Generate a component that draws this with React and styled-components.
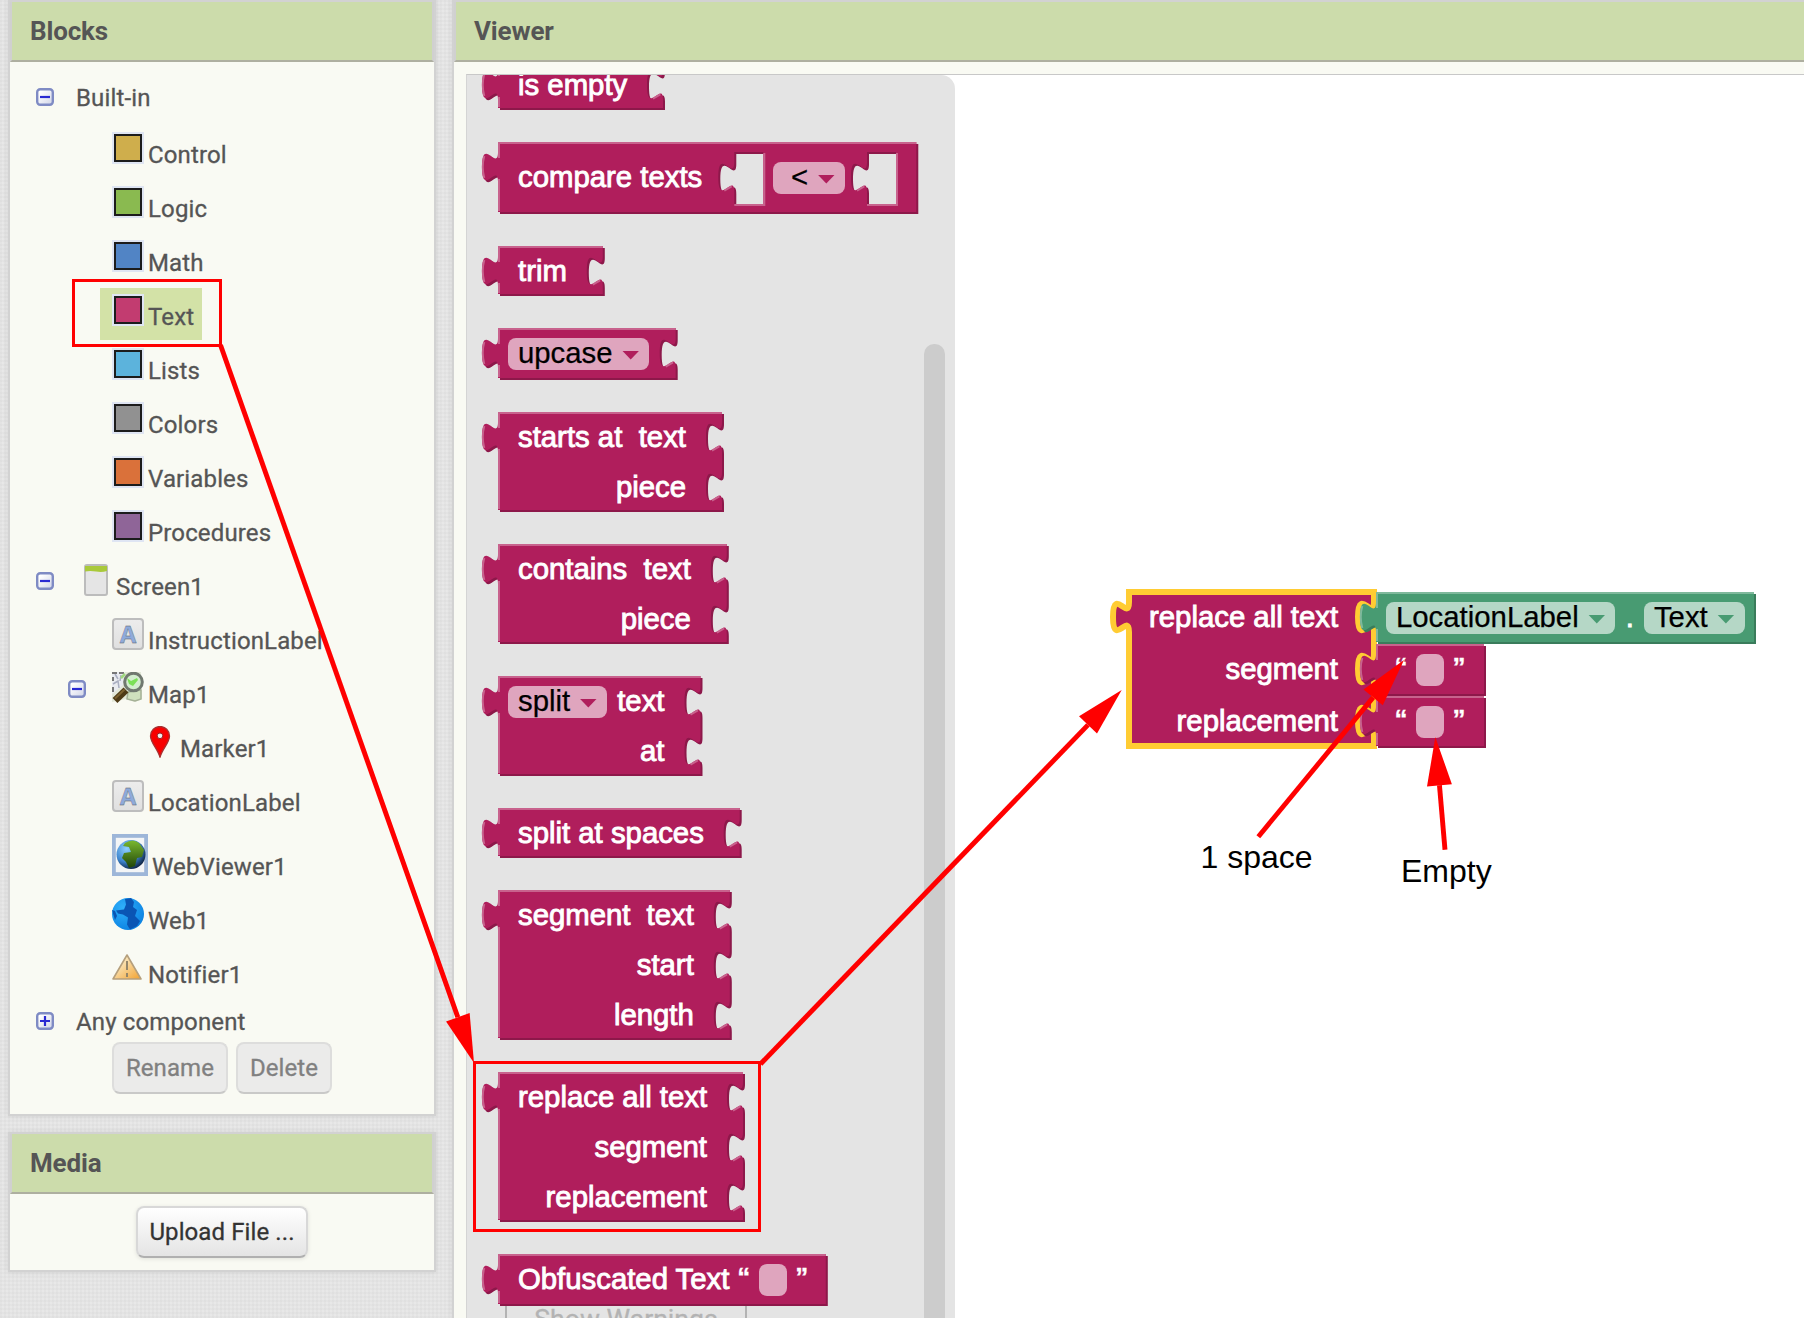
import React from "react";
import styled, { createGlobalStyle } from "styled-components";

const PINK = { fill: "#b01e5c", dark: "#8d184a", light: "#c8628d" };
const GREEN = { fill: "#489b72", dark: "#3a7c5b", light: "#7fb99c" };
const YELLOW = "#ffcc33";

const GlobalStyle = createGlobalStyle`
  * { box-sizing: border-box; }
  html, body { margin: 0; height: 100%; overflow: hidden; }
  body { font-family: Roboto, sans-serif; font-size: 24px; color: #555; }
`;

/* ---------- page frame ---------- */

const Page = styled.div`
  position: relative;
  display: flex;
  gap: 16px;
  width: 1804px;
  height: 1318px;
  padding-left: 8px;
  overflow: hidden;
  background-color: #e8e8e8;
  background-image:
    repeating-linear-gradient(0deg, rgba(0, 0, 0, 0.018) 0 2px, transparent 2px 4px),
    repeating-linear-gradient(90deg, rgba(0, 0, 0, 0.018) 0 2px, transparent 2px 4px);
`;

const Sidebar = styled.div`
  display: flex;
  flex-direction: column;
  gap: 16px;
  width: 428px;
  flex: none;
`;

const Panel = styled.section`
  display: flex;
  flex-direction: column;
  height: ${(p) => p.$height}px;
  border: 2px solid #d2d2d2;
  background: #f9faf3;
  box-shadow: 0 0 6px rgba(0, 0, 0, 0.08);
`;

const ViewerPanel = styled(Panel)`
  flex: 1;
  border-right: 0;
  border-bottom: 0;
`;

const Caption = styled.h2`
  flex: none;
  height: 60px;
  margin: 0;
  padding-left: 18px;
  border: solid #d0d0d0;
  border-width: 0 2px;
  border-right-width: ${(p) => (p.$openEnd ? 0 : 2)}px;
  border-bottom: 2px solid #aeafa0;
  background: #ccdcab;
  font-size: 26px;
  font-weight: 700;
  letter-spacing: -0.15px;
  line-height: 58px;
`;

/* ---------- component tree ---------- */

const Tree = styled.div`
  display: flex;
  flex-direction: column;
  padding: 13px 0 0 26px;
  letter-spacing: 0.14px;
  -webkit-text-stroke: 0.3px #555;
`;

const TreeRow = styled.div`
  display: flex;
  align-items: flex-start;
  height: ${(p) => p.$height}px;
  padding-left: ${(p) => p.$level * 32}px;
`;

const Toggle = styled.div`
  display: flex;
  flex: none;
  width: 32px;
  padding-top: ${(p) => (p.$plain ? 13 : 15)}px;
`;

const PlainLabel = styled.div`
  padding-left: 8px;
  line-height: 46px;
`;

const Item = styled.div`
  display: flex;
  align-items: flex-start;
  gap: 4px;
  height: ${(p) => p.$height - 2}px;
  margin-top: 1px;
  padding: 6px 8px 0 12px;
  background: ${(p) => (p.$selected ? "#d3e2a7" : "transparent")};
`;

const ItemLabel = styled.span`
  padding-top: ${(p) => p.$offset}px;
  line-height: 42px;
  white-space: nowrap;
`;

const Swatch = styled.span`
  width: 32px;
  height: 32px;
  border: 2px solid #dfe5f3;
  background: ${(p) => p.$color};
  box-shadow: inset 0 0 0 2px #1c1c1c;
`;

const LabelTile = styled.span`
  width: 32px;
  height: 32px;
  border: 2px solid #bdbdbd;
  border-radius: 4px;
  background: linear-gradient(#ececec, #e0e0e0);
  color: #8eaadb;
  font: bold 24px/28px "Noto Sans", sans-serif;
  text-align: center;
`;

const ButtonRow = styled.div`
  display: flex;
  gap: 8px;
  padding-left: 102px;
`;

const Button = styled.button`
  width: ${(p) => p.$width}px;
  height: 52px;
  padding: 0 0 1px;
  border: 2px solid ${(p) => (p.$muted ? "#dddddc" : "#d8d8d8")};
  border-bottom-color: ${(p) => (p.$muted ? "#c9c9c8" : "#b0b0b0")};
  border-radius: 8px;
  background: ${(p) => (p.$muted ? "#ebebea" : "linear-gradient(#ffffff, #e4e4e4)")};
  box-shadow: ${(p) => (p.$muted ? "none" : "0 1px 4px rgba(0,0,0,.1)")};
  color: ${(p) => (p.$muted ? "#808080" : "#333")};
  font: 24px Roboto, sans-serif;
  letter-spacing: 0.1px;
  -webkit-text-stroke: 0.3px currentColor;
  white-space: nowrap;
`;

const MediaBody = styled.div`
  display: flex;
  justify-content: center;
  padding-top: 12px;
`;

/* ---------- workspace and flyout ---------- */

const Workspace = styled.div`
  position: relative;
  flex: 1;
  margin: 12px 0 0 12px;
  border-top: 1px solid #c8c8c8;
  border-left: 1px solid #d4d4d4;
  background: #fff;
  overflow: hidden;
`;

const Flyout = styled.div`
  position: relative;
  display: flex;
  width: 488px;
  height: 1243px;
  border-radius: 0 14px 0 0;
  background: #e4e4e4;
  overflow: hidden;
`;

const FlyoutList = styled.div`
  position: relative;
  display: flex;
  flex-direction: column;
  gap: 34px;
  flex: 1;
  margin-top: -15px;
  padding-left: 31px;
`;

const ScrollThumb = styled.div`
  width: 21px;
  margin: 269px 10px 0 0;
  border-radius: 10px 10px 0 0;
  background: #cccccc;
`;

const WarningsButton = styled.div`
  position: absolute;
  left: 38px;
  top: 1216px;
  width: 242px;
  height: 60px;
  border: 2px solid #b3b3b3;
  color: #b3b3b3;
  font-size: 26.6px;
  line-height: 51px;
  text-align: center;
  -webkit-text-stroke: 0.3px #b3b3b3;
`;

/* ---------- blocks ---------- */

const BlockBox = styled.div`
  position: relative;
  display: flex;
  flex: none;
  flex-direction: column;
  width: ${(p) => p.$width}px;
  height: ${(p) => p.$height}px;
  padding-top: ${(p) => p.$padTop || 0}px;
  font: 29.33px "Liberation Sans", sans-serif;
  color: #fff;
`;

const BlockArt = styled.svg`
  position: absolute;
  left: 0;
  top: 0;
  overflow: visible;
`;

const BlockRow = styled.div`
  position: relative;
  display: flex;
  flex: none;
  justify-content: ${(p) => (p.$packed ? "flex-start" : p.$end ? "flex-end" : "space-between")};
  height: ${(p) => p.$height || 50}px;
  padding-right: ${(p) => (p.$packed ? 0 : 36)}px;
`;

const Word = styled.span`
  line-height: 50px;
  padding-left: ${(p) => (p.$first ? 20 : 0)}px;
  white-space: pre;
  -webkit-text-stroke: 0.9px #fff;
`;

const Dot = styled(Word)`
  width: 28.5px;
  text-align: center;
`;

const Chip = styled.span`
  display: flex;
  align-items: center;
  gap: 9.5px;
  height: 32px;
  margin: 10px 0 0 ${(p) => p.$margin || 0}px;
  padding: 0 10px 0 ${(p) => p.$padLeft || 10}px;
  border-radius: 8px;
  background: rgba(255, 255, 255, 0.6);
  color: #000;
  line-height: 32px;
  -webkit-text-stroke: 0.25px #000;
`;

const ChipText = styled.span`
  height: 32px;
  margin-top: -2px;
`;

const Arrow = styled.span`
  width: 17.3px;
  height: 9px;
  margin-top: 2px;
  background: ${(p) => p.$color};
  clip-path: polygon(0 0, 100% 0, 50% 100%);
`;

const SocketGap = styled.span`
  width: ${(p) => p.$width}px;
`;

const Quote = styled.span`
  width: 30px;
  margin-left: ${(p) => p.$margin || 0}px;
  text-align: center;
  font-size: 26px;
  font-weight: 700;
  line-height: 47px;
  -webkit-text-stroke: 0.3px #fff;
`;

const TextField = styled.span`
  width: 28px;
  height: 32px;
  margin-top: 10px;
  border-radius: 8px;
  background: rgba(255, 255, 255, 0.6);
`;

const Placed = styled.div`
  position: absolute;
  left: ${(p) => p.$x}px;
  top: ${(p) => p.$y}px;
`;

/* Puzzle outline in half-size units, drawn at scale 2. */
function BlockShape({ width, height, sockets = [], holes = [], colors, selected }) {
  const w = width / 2;
  const h = height / 2;
  let d = `M0,0H${w}`;
  let light = `M0.5,${h - 0.5}V18.5m-7.36,-0.5q-1.52,-5.5 0,-11m7.36,1V0.5H${w}`;
  sockets.forEach((y) => {
    d += `V${y + 5}c0,10 -8,-8 -8,7.5s8,-2.5 8,7.5`;
    light += `M${w - 5},${y + 19.3}l3.68,-2.1`;
  });
  d += `V${h}H0V20c0,-10 -8,8 -8,-7.5s8,2.5 8,-7.5z`;
  holes.forEach((right) => {
    const x = right / 2;
    d += `M${x},5h-14.5v5c0,10 -8,-8 -8,7.5s8,-2.5 8,7.5v6h14.5z`;
    light += `M${x + 0.5},5.5v26h-15M${x - 19.5},24.3l3.68,-2.1`;
  });
  return (
    <BlockArt width={width} height={height}>
      <g transform="scale(2)">
        {!selected && <path d={d} transform="translate(1,1)" fill={colors.dark} />}
        <path d={d} fill={colors.fill} stroke={selected ? YELLOW : "none"} strokeWidth="3" />
        {!selected && <path d={light} fill="none" stroke={colors.light} strokeWidth="1" />}
      </g>
    </BlockArt>
  );
}

function Block({ width, height, padTop, colors = PINK, sockets, holes, selected, children }) {
  return (
    <BlockBox $width={width} $height={height} $padTop={padTop}>
      <BlockShape {...{ width, height, sockets, holes, colors, selected }} />
      {children}
    </BlockBox>
  );
}

function Dropdown({ text, colors = PINK, margin, padLeft }) {
  return (
    <Chip $margin={margin} $padLeft={padLeft}>
      <ChipText>{text}</ChipText>
      <Arrow $color={colors.fill} />
    </Chip>
  );
}

/* A block whose inputs are stacked down its right side. */
function InputBlock({ width, lead, dropdown, inputs, pitch = 50, height, selected }) {
  return (
    <Block
      width={width}
      height={height || inputs.length * 50 - 2}
      sockets={inputs.map((_, i) => (i * pitch) / 2)}
      selected={selected}
    >
      {inputs.map((name, i) => (
        <BlockRow key={i} $height={pitch} $end={i > 0}>
          {i === 0 && lead && <Word $first>{lead}</Word>}
          {i === 0 && dropdown && <Dropdown text={dropdown} margin={10} />}
          {name && <Word>{name}</Word>}
        </BlockRow>
      ))}
    </Block>
  );
}

function StringBlock() {
  return (
    <Block width={108} height={50}>
      <BlockRow $packed>
        <Quote $margin={10}>“</Quote>
        <TextField />
        <Quote>”</Quote>
      </BlockRow>
    </Block>
  );
}

/* ---------- icons ---------- */

function ToggleIcon({ open }) {
  return (
    <svg width="18" height="18" viewBox="0 0 18 18">
      <defs>
        <linearGradient id="tg" x2="1" y2="1">
          <stop offset="0.2" stopColor="#fff" />
          <stop offset="1" stopColor="#cfd3e6" />
        </linearGradient>
      </defs>
      <rect x="1.2" y="1.2" width="15.6" height="15.6" rx="3" fill="url(#tg)" stroke="#7f8bc4" strokeWidth="2.4" />
      <path d={open ? "M4 9h10" : "M4 9h10M9 4v10"} stroke="#2a2ad2" strokeWidth="2.2" />
    </svg>
  );
}

function ScreenIcon() {
  return (
    <svg width="32" height="32" viewBox="0 0 32 32">
      <rect x="5" y="1" width="22" height="30" rx="2" fill="#e5e5e5" stroke="#bcbcbc" strokeWidth="2" />
      <path d="M5 2h22v5q-5 1.5-11 .5T5 7.500z" fill="#a9c93a" />
    </svg>
  );
}

function MapIcon() {
  return (
    <svg width="32" height="32" viewBox="0 0 32 32">
      <path d="M0 0h29l1 27-7 3-9-3-14 3z" fill="#e3e8d8" />
      <path d="M0 0h13L11 13 0 22z" fill="#e9ebf0" />
      <path d="M3 2l3 5M1 12l5-3 1 7M9 3l-1 6" stroke="#a9aec0" strokeWidth="1.500" fill="none" />
      <path d="M0 1h5M7 1h5M1 5v4M1 15v5" stroke="#777" strokeWidth="2" />
      <path d="M16 20l13-2v9l-6 2-8-2z" fill="#cfe0bd" stroke="#a5b197" strokeWidth="1.500" />
      <path d="M9 6l4-4" stroke="#9fd87e" strokeWidth="2.500" />
      <circle cx="21.500" cy="10" r="8.800" fill="#d3edcf" stroke="#70786f" strokeWidth="3" />
      <path d="M15 6l4 3 6-3 1 2-5 6-4-2z" fill="#7be058" />
      <path d="M14 18L3 28.500" stroke="#4e3a16" strokeWidth="7" />
      <path d="M12.500 17.500L3 26.500" stroke="#7b6230" strokeWidth="2" />
    </svg>
  );
}

function MarkerIcon() {
  return (
    <svg width="32" height="32" viewBox="0 0 32 32">
      <path d="M16 31.500C14 23 6.500 17 6.500 10a9.500 9.500 0 0 1 19 0C25.500 17 18 23 16 31.500z" fill="#f80000" stroke="#a83030" strokeWidth="1.300" />
      <circle cx="16" cy="9.800" r="2.800" fill="#eee" stroke="#922" strokeWidth="1" />
    </svg>
  );
}

function WebViewerIcon() {
  return (
    <svg width="36" height="42" viewBox="0 0 36 42">
      <defs>
        <radialGradient id="wv" cx="0.35" cy="0.3" r="0.75">
          <stop offset="0" stopColor="#8fd0ff" />
          <stop offset="0.6" stopColor="#3f86cf" />
          <stop offset="1" stopColor="#0c2140" />
        </radialGradient>
        <linearGradient id="land" x2="0" y2="1">
          <stop offset="0" stopColor="#7ab82f" />
          <stop offset="1" stopColor="#1f4408" />
        </linearGradient>
      </defs>
      <rect x="1.900" y="1.900" width="32.200" height="38.200" fill="#f3f5f6" stroke="#9db6d8" strokeWidth="3.800" />
      <circle cx="19" cy="20.500" r="14.500" fill="url(#wv)" />
      <path d="M13 9q8-5 14 0l5 7-2 7-5 1-2 8-6 2-3-6-4-4 2-5 7-1-2-5-6-1z" fill="url(#land)" />
    </svg>
  );
}

function WebIcon() {
  return (
    <svg width="32" height="32" viewBox="0 0 32 32">
      <defs>
        <radialGradient id="wb" cx="0.35" cy="0.3" r="0.8">
          <stop offset="0" stopColor="#2fb0fb" />
          <stop offset="1" stopColor="#0a7fe0" />
        </radialGradient>
      </defs>
      <circle cx="16" cy="16" r="16" fill="url(#wb)" />
      <path d="M13 1l6-1 3 4-1 5 4 3-2 6 5 5-3 5-7 3.500-3-5 1-7-5-3-5-1-2-3 8-1 2-5z" fill="#0a55b4" />
      <path d="M0 12l3 1 2 5-2 4z" fill="#0a55b4" />
    </svg>
  );
}

function NotifierIcon() {
  return (
    <svg width="32" height="32" viewBox="0 0 32 32">
      <defs>
        <linearGradient id="nt" x2="1" y2="1">
          <stop offset="0.2" stopColor="#fbeecb" />
          <stop offset="1" stopColor="#f2a02c" />
        </linearGradient>
      </defs>
      <path d="M15 3L29 27H1z" fill="url(#nt)" stroke="#b59f7c" strokeWidth="1.600" strokeLinejoin="round" />
      <path d="M15 9v9M15 21v4" stroke="#94866a" strokeWidth="2" />
    </svg>
  );
}

/* ---------- tree data ---------- */

const TREE = [
  { level: 0, toggle: "open", label: "Built-in", plain: true },
  { level: 1, label: "Control", icon: <Swatch $color="#cfae4c" /> },
  { level: 1, label: "Logic", icon: <Swatch $color="#8aba50" /> },
  { level: 1, label: "Math", icon: <Swatch $color="#5184c5" /> },
  { level: 1, label: "Text", icon: <Swatch $color="#c23c70" />, selected: true },
  { level: 1, label: "Lists", icon: <Swatch $color="#5cb3dc" /> },
  { level: 1, label: "Colors", icon: <Swatch $color="#919191" /> },
  { level: 1, label: "Variables", icon: <Swatch $color="#da713a" /> },
  { level: 1, label: "Procedures", icon: <Swatch $color="#8f6598" /> },
  { level: 0, toggle: "open", label: "Screen1", icon: <ScreenIcon /> },
  { level: 1, label: "InstructionLabel", icon: <LabelTile>A</LabelTile> },
  { level: 1, toggle: "open", label: "Map1", icon: <MapIcon /> },
  { level: 2, label: "Marker1", icon: <MarkerIcon /> },
  { level: 1, label: "LocationLabel", icon: <LabelTile>A</LabelTile> },
  { level: 1, label: "WebViewer1", icon: <WebViewerIcon />, height: 64 },
  { level: 1, label: "Web1", icon: <WebIcon /> },
  { level: 1, label: "Notifier1", icon: <NotifierIcon /> },
  { level: 0, toggle: "closed", label: "Any component", plain: true, height: 43 },
];

function TreeNode({ node }) {
  const height = node.height || (node.plain ? 50 : 54);
  return (
    <TreeRow $level={node.level} $height={height}>
      <Toggle $plain={node.plain}>
        {node.toggle && <ToggleIcon open={node.toggle === "open"} />}
      </Toggle>
      {node.plain ? (
        <PlainLabel>{node.label}</PlainLabel>
      ) : (
        <Item $height={height} $selected={node.selected}>
          {node.icon}
          <ItemLabel $offset={height - 52}>{node.label}</ItemLabel>
        </Item>
      )}
    </TreeRow>
  );
}

/* ---------- red annotations over the page ---------- */

const Overlay = styled.svg`
  position: absolute;
  left: 0;
  top: 0;
  pointer-events: none;
`;

const Note = styled.div`
  position: absolute;
  left: ${(p) => p.$x}px;
  top: ${(p) => p.$y}px;
  color: #000;
  font: 32px/36px "Liberation Sans", sans-serif;
  white-space: nowrap;
`;

const Frame = styled.div`
  position: absolute;
  left: ${(p) => p.$x}px;
  top: ${(p) => p.$y}px;
  width: ${(p) => p.$w}px;
  height: ${(p) => p.$h}px;
  border: 3px solid #f00;
`;

function RedArrow({ from, to }) {
  const dx = to[0] - from[0];
  const dy = to[1] - from[1];
  const len = Math.hypot(dx, dy);
  const ux = dx / len;
  const uy = dy / len;
  const bx = to[0] - ux * 48.5;
  const by = to[1] - uy * 48.5;
  return (
    <g>
      <line x1={from[0]} y1={from[1]} x2={bx} y2={by} stroke="#f00" strokeWidth="4.9" />
      <polygon
        fill="#f00"
        points={`${to[0]},${to[1]} ${bx - uy * 12.5},${by + ux * 12.5} ${bx + uy * 12.5},${by - ux * 12.5}`}
      />
    </g>
  );
}

export default function App() {
  return (
    <>
      <GlobalStyle />
      <Page>
        <Sidebar>
          <Panel $height={1116}>
            <Caption>Blocks</Caption>
            <Tree>
              {TREE.map((node) => (
                <TreeNode key={node.label} node={node} />
              ))}
            </Tree>
            <ButtonRow>
              <Button $width={116} $muted>Rename</Button>
              <Button $width={96} $muted>Delete</Button>
            </ButtonRow>
          </Panel>
          <Panel $height={140}>
            <Caption>Media</Caption>
            <MediaBody>
              <Button $width={172}>Upload File ...</Button>
            </MediaBody>
          </Panel>
        </Sidebar>

        <ViewerPanel $height={1318}>
          <Caption $openEnd>Viewer</Caption>
          <Workspace>
            <Flyout>
              <WarningsButton>Show Warnings</WarningsButton>
              <FlyoutList>
                <InputBlock width={165} lead="is empty" inputs={[""]} />
                <Block width={418.3} height={70} padTop={10} holes={[265.3, 398]}>
                  <BlockRow $packed>
                    <Word $first>compare texts</Word>
                    <SocketGap $width={70.8} />
                    <Dropdown text="<" padLeft={18} />
                  </BlockRow>
                </Block>
                <InputBlock width={104.8} lead="trim" inputs={[""]} />
                <InputBlock width={177.7} height={50} dropdown="upcase" inputs={[""]} />
                <InputBlock width={224} lead="starts at" inputs={["text", "piece"]} />
                <InputBlock width={228.8} lead="contains" inputs={["text", "piece"]} />
                <InputBlock width={202.5} dropdown="split" inputs={["text", "at"]} />
                <InputBlock width={241.7} lead="split at spaces" inputs={[""]} />
                <InputBlock width={231.8} lead="segment" inputs={["text", "start", "length"]} />
                <InputBlock width={245} lead="replace all text" inputs={["", "segment", "replacement"]} />
                <Block width={327.8} height={50}>
                  <BlockRow $packed>
                    <Word $first>Obfuscated Text</Word>
                    <Quote $margin={-0.7}>“</Quote>
                    <TextField />
                    <Quote>”</Quote>
                  </BlockRow>
                </Block>
              </FlyoutList>
              <ScrollThumb />
            </Flyout>

            <Placed $x={662} $y={517}>
              <InputBlock
                width={245}
                height={154}
                pitch={52}
                selected
                lead="replace all text"
                inputs={["", "segment", "replacement"]}
              />
            </Placed>
            <Placed $x={909} $y={517}>
              <Block width={378} height={50} colors={GREEN}>
                <BlockRow $packed>
                  <Dropdown text="LocationLabel" colors={GREEN} margin={10} />
                  <Dot>.</Dot>
                  <Dropdown text="Text" colors={GREEN} />
                </BlockRow>
              </Block>
            </Placed>
            <Placed $x={909} $y={569}>
              <StringBlock />
            </Placed>
            <Placed $x={909} $y={621}>
              <StringBlock />
            </Placed>
          </Workspace>
        </ViewerPanel>

        <Frame $x={72} $y={279} $w={150} $h={68} />
        <Frame $x={473} $y={1061} $w={288} $h={171} />
        <Overlay width="1804" height="1318">
          <RedArrow from={[220.5, 345]} to={[474, 1063]} />
          <RedArrow from={[760.5, 1064]} to={[1121.7, 690]} />
          <RedArrow from={[1258.3, 836.7]} to={[1404, 660]} />
          <RedArrow from={[1445, 849.7]} to={[1435.3, 737]} />
        </Overlay>
        <Note $x={1200.5} $y={839}>1 space</Note>
        <Note $x={1401} $y={853}>Empty</Note>
      </Page>
    </>
  );
}
